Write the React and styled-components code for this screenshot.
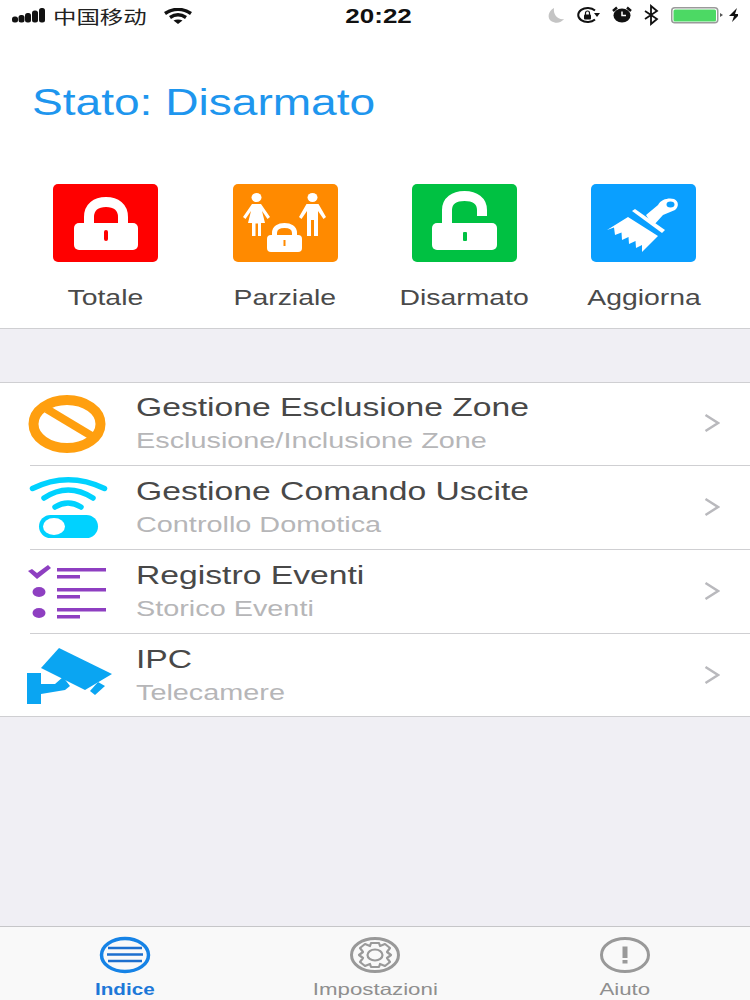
import React from 'react';
import styled, { createGlobalStyle } from 'styled-components';

const GlobalStyle = createGlobalStyle`
  html, body { margin: 0; padding: 0; background: #f0eff4; }
  body { font-family: "Liberation Sans", Arial, sans-serif; }
`;

const Page = styled.div`
  width: 750px;
  height: 1000px;
  display: flex;
  flex-direction: column;
  overflow: hidden;
  background: #f0eff4;
`;

const Top = styled.header`
  height: 328px;
  background: #fff;
  border-bottom: 1px solid #cfcfd2;
`;

const StatusBar = styled.div`
  height: 32px;
  display: grid;
  grid-template-columns: 1fr auto 1fr;
  align-items: center;
  padding: 0 12px;
  color: #111;
`;

const StatusLeft = styled.div`
  display: flex;
  align-items: center;
  gap: 9px;
`;

const Carrier = styled.span`
  display: inline-block;
  width: 102px;
  margin-left: -2px;
  font-family: "Noto Sans CJK SC", sans-serif;
  font-size: 18px;
  line-height: 24px;
  color: #222;
  white-space: nowrap;
  transform: scaleX(1.3);
  transform-origin: left;
`;

const Clock = styled.span`
  display: inline-block;
  margin-left: 8px;
  font-size: 20px;
  font-weight: 700;
  transform: scaleX(1.3);
  color: #111;
`;

const StatusRight = styled.div`
  display: flex;
  align-items: center;
  justify-content: flex-end;
`;

const Title = styled.h1`
  margin: 50px 0 0 32px;
  height: 42px;
  font-size: 36px;
  line-height: 42px;
  font-weight: 400;
  color: #1e96ee;
  white-space: nowrap;
  transform: scaleX(1.28);
  transform-origin: left;
`;

const Actions = styled.div`
  display: grid;
  grid-template-columns: repeat(4, 179.4px);
  padding: 60px 0 0 16px;
`;

const Action = styled.div`
  display: flex;
  flex-direction: column;
  align-items: center;
`;

const Tile = styled.div`
  width: 105px;
  height: 78px;
  border-radius: 5px;
  background: ${({ $color }) => $color};
  display: flex;
  align-items: center;
  justify-content: center;
`;

const ActionLabel = styled.span`
  display: inline-block;
  margin-top: 24px;
  font-size: 22px;
  line-height: 24px;
  color: #4a4a4a;
  white-space: nowrap;
  transform: scaleX(1.29);
`;

const List = styled.ul`
  list-style: none;
  margin: 53px 0 0;
  padding: 0;
  background: #fff;
  border-top: 1px solid #cfcfd2;
  border-bottom: 1px solid #cfcfd2;
`;

const Row = styled.li`
  height: 84px;
  display: flex;
  align-items: center;
  position: relative;
  &:first-child {
    margin-top: -1px;
  }
  &:last-child {
    margin-bottom: -2px;
  }
  & + &::before {
    content: '';
    position: absolute;
    top: -1px;
    left: 30px;
    right: 0;
    height: 1px;
    background: #cfcfd2;
  }
`;

const RowIcon = styled.div`
  width: 136px;
  flex: none;
  display: flex;
  justify-content: flex-start;
  padding-left: 27px;
  box-sizing: border-box;
`;

const RowText = styled.div`
  flex: 1;
  min-width: 0;
  margin-bottom: 3px;
`;

const RowTitle = styled.div`
  font-size: 26px;
  line-height: 30px;
  color: #484848;
  white-space: nowrap;
  transform: scaleX(1.295);
  transform-origin: left;
`;

const RowSub = styled.div`
  margin-top: 7px;
  font-size: 22px;
  line-height: 24px;
  color: #b6b6b8;
  white-space: nowrap;
  transform: scaleX(1.31);
  transform-origin: left;
`;

const Chevron = styled.svg`
  width: 16px;
  height: 20px;
  margin: 0 30px 3px 0;
  flex: none;
`;

const TabBar = styled.nav`
  margin-top: auto;
  height: 73px;
  background: #f9f9f9;
  border-top: 1px solid #c6c6c8;
  display: grid;
  grid-template-columns: 250px 250px 250px;
`;

const Tab = styled.div`
  display: flex;
  flex-direction: column;
  align-items: center;
  padding-top: 9px;
`;

const TabLabel = styled.span`
  display: inline-block;
  margin-top: 5px;
  font-size: 16.5px;
  line-height: 20px;
  font-weight: ${({ $active }) => ($active ? 700 : 400)};
  color: ${({ $active }) => ($active ? '#1d78d8' : '#8f8f8f')};
  transform: scaleX(${({ $active }) => ($active ? 1.25 : 1.35)});
`;

const SignalIcon = () => (
  <svg width="34" height="16" viewBox="0 0 34 16">
    <g fill="#111">
      <rect x="0" y="8.5" width="6" height="6" rx="2.5" />
      <rect x="6.5" y="7" width="6" height="7.5" rx="2.5" />
      <rect x="13" y="5" width="6" height="9.5" rx="2.5" />
      <rect x="20" y="2.5" width="6" height="12" rx="2.5" />
      <rect x="27" y="0" width="6" height="14.5" rx="2.5" />
    </g>
  </svg>
);

const WifiIcon = () => (
  <svg width="28" height="16" viewBox="0 0 28 16">
    <path d="M1 5.5C9 0 19 0 27 5.5" fill="none" stroke="#111" strokeWidth="3.4" />
    <path d="M6 9.5C11 6 17 6 22 9.5" fill="none" stroke="#111" strokeWidth="3.4" />
    <path d="M9.5 12.5C12 11 16 11 18.5 12.5L14 16Z" fill="#111" />
  </svg>
);

const StatusIcons = () => (
  <svg width="191" height="24" viewBox="0 0 191 24">
    <path d="M7 4C1 7 0 14 4 17C9 20 14 19 17 15C11 16 6 11 7 4Z" fill="#c4c4c4" />
    <path d="M48 6.5A9.5 7 0 1 0 48 15.5" fill="none" stroke="#111" strokeWidth="2" />
    <path d="M47 9H53L50 13Z" fill="#111" />
    <rect x="37" y="10.5" width="7" height="5" rx="1" fill="#111" />
    <path d="M38.5 11V9A2 2 0 0 1 42.5 9V11" fill="none" stroke="#111" strokeWidth="1.2" />
    <ellipse cx="75" cy="11.5" rx="8.5" ry="7" fill="#111" />
    <path d="M75 7.5V11.5H79" fill="none" stroke="#fff" strokeWidth="1.5" />
    <path d="M66 7L70 3.5M84 7L80 3.5" stroke="#111" strokeWidth="2.5" />
    <path d="M98 7L110 15L104 20V2L110 7L98 15" fill="none" stroke="#111" strokeWidth="1.8" />
    <rect x="124.75" y="3.75" width="46" height="15" rx="3" fill="none" stroke="#9a9a9a" strokeWidth="1.5" />
    <rect x="126.5" y="5.5" width="42.5" height="12" rx="1.5" fill="#4cd964" />
    <path d="M173 9L176 11L173 13Z" fill="#555" />
    <path d="M190 4L182 12H187L185 18L193 10H188Z" fill="#111" />
  </svg>
);

const ClosedLock = () => (
  <svg width="64" height="53" viewBox="0 0 64 53">
    <path d="M15 30V20C15 10 22 5 32 5C42 5 49 10 49 20V30" fill="none" stroke="#fff" strokeWidth="10" />
    <rect x="0" y="26" width="64" height="27" rx="5" fill="#fff" />
    <rect x="30" y="33" width="4" height="11" rx="2" fill="#ff0000" />
  </svg>
);

const OpenLock = () => (
  <svg width="65" height="64" viewBox="0 0 65 64">
    <path d="M15 34V19C15 10 22 5 32.5 5C43 5 50 10 50 19V25" fill="none" stroke="#fff" strokeWidth="10" />
    <rect x="0" y="32" width="65" height="27" rx="5" fill="#fff" />
    <rect x="31" y="41" width="4" height="9" rx="1" fill="#00c142" />
  </svg>
);

const FamilyLock = () => (
  <svg width="105" height="78" viewBox="0 0 105 78">
    <g fill="#fff">
      <ellipse cx="23.5" cy="13.5" rx="5" ry="4.5" />
      <path d="M19 20H28L37 33L34.5 35L29 27L32 39H28V52H25V39.5H22.5V52H19V39H15L18 27L12.5 35L10 33Z" />
      <ellipse cx="79.5" cy="13.5" rx="5" ry="4.5" />
      <path d="M73.5 20H85.5L93 33L90.5 35L85 27V52H81V36H78V52H74V27L68.5 35L66 33Z" />
      <rect x="34" y="51" width="35" height="17" rx="4" />
    </g>
    <path d="M41.5 53V49C41.5 44 46 41.5 51.5 41.5C57 41.5 61.5 44 61.5 49V53" fill="none" stroke="#fff" strokeWidth="5" />
    <rect x="50.5" y="56" width="2" height="6" fill="#ff8a00" />
  </svg>
);

const Brush = () => (
  <svg width="105" height="78" viewBox="0 0 105 78">
    <path fillRule="evenodd" fill="#fff" d="M55 31L67 21C70 15 78 13.5 83 15C88 17 88 23 84 26L72 31L62 42ZM75.5 20.5A4 3 0 1 0 83.5 20.5A4 3 0 1 0 75.5 20.5Z" />
    <path fill="#fff" d="M41 27L44 25L74 46L71 49Z" />
    <path fill="#fff" d="M37 33L67 52L51 68L51 61L45 64L44.500 57L38 60L37.500 53L31 56L30.500 48.500L24 51L23 43.500L16 46Z" />
  </svg>
);

const NoEntry = () => (
  <svg width="80" height="60" viewBox="0 0 80 60">
    <ellipse cx="40" cy="30" rx="33.5" ry="24" fill="none" stroke="#ff9f0f" strokeWidth="10" />
    <path d="M19.7 15L64.7 42" stroke="#ff9f0f" strokeWidth="8" />
  </svg>
);

const WifiToggle = () => (
  <svg width="82" height="66" viewBox="0 0 82 66">
    <g fill="none" stroke="#00d2ff" strokeWidth="5.5" strokeLinecap="round">
      <path d="M5.5 13.5Q41 -4 77.5 13.5" />
      <path d="M17 23Q41 7 66 23" />
      <path d="M28 32Q41 24 54 32" />
    </g>
    <rect x="12" y="40" width="59" height="23" rx="11.5" fill="#00d2ff" />
    <ellipse cx="27" cy="51.5" rx="11" ry="8.5" fill="#fff" />
  </svg>
);

const Checklist = () => (
  <svg width="80" height="56" viewBox="0 0 80 56">
    <g fill="#8e3fc1">
      <path d="M1 7L5 5L10 9L21 1L24 4L10 15Z" />
      <ellipse cx="12" cy="28" rx="6.5" ry="5" />
      <ellipse cx="12" cy="49" rx="6.5" ry="5" />
      <rect x="30" y="4" width="49" height="3.5" />
      <rect x="30" y="11" width="23" height="3.5" />
      <rect x="30" y="24" width="49" height="3.5" />
      <rect x="30" y="31" width="23" height="3.5" />
      <rect x="30" y="44" width="49" height="3.5" />
      <rect x="30" y="51" width="23" height="3.5" />
    </g>
  </svg>
);

const Camera = () => (
  <svg width="85" height="56" viewBox="0 0 85 56">
    <g fill="#0aa5f2">
      <path d="M32 0L85 26L58 42L14 20Z" />
      <path d="M0 25H14V56H0Z" />
      <path d="M14 36H28L36 29L43 38L38 42L14 46Z" />
      <path d="M63 43L71 34L78 38L68 47Z" />
    </g>
  </svg>
);

const Indice = () => (
  <svg width="52" height="38" viewBox="0 0 52 38">
    <ellipse cx="26" cy="19" rx="23.5" ry="16.5" fill="none" stroke="#1683e6" strokeWidth="3.5" />
    <path d="M9 12H43M8 18.5H44M9 25H43" stroke="#1d6fce" strokeWidth="2.5" />
  </svg>
);

const Gear = () => (
  <svg width="52" height="38" viewBox="0 0 52 38">
    <ellipse cx="26" cy="19" rx="23.5" ry="16.5" fill="none" stroke="#999" strokeWidth="3" />
    <path d="M22 7H30L31 10L36 8L41 12L38 16L42 19L38 22L41 26L36 30L31 28L30 31H22L21 28L16 30L11 26L14 22L10 19L14 16L11 12L16 8L21 10Z" fill="none" stroke="#999" strokeWidth="2.2" strokeLinejoin="round" />
    <ellipse cx="26" cy="19" rx="7.5" ry="5.5" fill="none" stroke="#999" strokeWidth="2.2" />
  </svg>
);

const Alert = () => (
  <svg width="52" height="38" viewBox="0 0 52 38">
    <ellipse cx="26" cy="19" rx="23.5" ry="16.5" fill="none" stroke="#999" strokeWidth="3" />
    <rect x="23.5" y="10.5" width="5" height="11.5" fill="#999" />
    <rect x="23.5" y="24" width="5" height="3.5" fill="#999" />
  </svg>
);

const actions = [
  { label: 'Totale', color: '#ff0000', icon: <ClosedLock /> },
  { label: 'Parziale', color: '#ff8a00', icon: <FamilyLock /> },
  { label: 'Disarmato', color: '#00c142', icon: <OpenLock /> },
  { label: 'Aggiorna', color: '#0a9fff', icon: <Brush /> },
];

const rows = [
  { title: 'Gestione Esclusione Zone', sub: 'Esclusione/Inclusione Zone', icon: <NoEntry /> },
  { title: 'Gestione Comando Uscite', sub: 'Controllo Domotica', icon: <WifiToggle /> },
  { title: 'Registro Eventi', sub: 'Storico Eventi', icon: <Checklist /> },
  { title: 'IPC', sub: 'Telecamere', icon: <Camera /> },
];

const tabs = [
  { label: 'Indice', icon: <Indice />, active: true },
  { label: 'Impostazioni', icon: <Gear /> },
  { label: 'Aiuto', icon: <Alert /> },
];

const App = () => (
  <Page>
    <GlobalStyle />
    <Top>
      <StatusBar>
        <StatusLeft>
          <SignalIcon />
          <Carrier>中国移动</Carrier>
          <WifiIcon />
        </StatusLeft>
        <Clock>20:22</Clock>
        <StatusRight>
          <StatusIcons />
        </StatusRight>
      </StatusBar>
      <Title>Stato: Disarmato</Title>
      <Actions>
        {actions.map((a) => (
          <Action key={a.label}>
            <Tile $color={a.color}>{a.icon}</Tile>
            <ActionLabel>{a.label}</ActionLabel>
          </Action>
        ))}
      </Actions>
    </Top>
    <List>
      {rows.map((r) => (
        <Row key={r.title}>
          <RowIcon>{r.icon}</RowIcon>
          <RowText>
            <RowTitle>{r.title}</RowTitle>
            <RowSub>{r.sub}</RowSub>
          </RowText>
          <Chevron viewBox="0 0 16 20">
            <path d="M1.5 2L14 10L1.5 18" fill="none" stroke="#b9b9bd" strokeWidth="2.5" />
          </Chevron>
        </Row>
      ))}
    </List>
    <TabBar>
      {tabs.map((t) => (
        <Tab key={t.label}>
          {t.icon}
          <TabLabel $active={t.active}>{t.label}</TabLabel>
        </Tab>
      ))}
    </TabBar>
  </Page>
);

export default App;
